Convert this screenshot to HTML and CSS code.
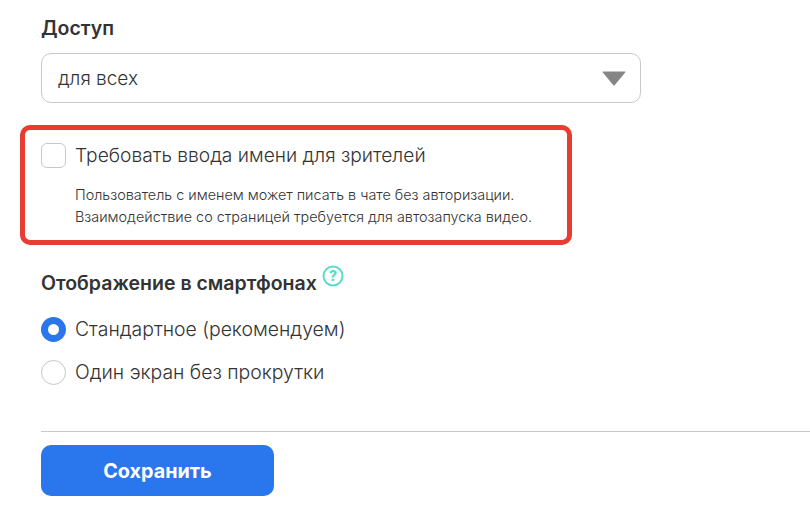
FILE: index.html
```html
<!DOCTYPE html>
<html lang="en">
<head>
    <meta charset="UTF-8">
    <title>Настройки доступа</title>
    <link rel="stylesheet" href="styles.css">
</head>
<body>
    <div class="page">
        <h3 class="title">Доступ</h3>
        <div class="select">
            <span>для всех</span>
            <svg class="select-arrow" width="24" height="15" viewBox="0 0 24 15"><path d="M1 .5h22a.5.5 0 0 1 .4.8L12.6 14.3a.8.8 0 0 1-1.2 0L.6 1.3A.5.5 0 0 1 1 .5z" fill="#858585"/></svg>
        </div>

        <div class="highlight">
            <div class="option option-check">
                <span class="checkbox"></span>
                <span>Требовать ввода имени для зрителей</span>
            </div>
            <p class="hint">Пользователь с именем может писать в чате без авторизации.<br>Взаимодействие со страницей требуется для автозапуска видео.</p>
        </div>

        <div class="title-row">
            <h3 class="title">Отображение в смартфонах</h3>
            <svg class="help" width="22" height="22" viewBox="0 0 22 22">
                <circle cx="11" cy="11" r="9.5" fill="#fff" stroke="#5ddccb" stroke-width="2"/>
                <text x="11" y="16" text-anchor="middle" class="help-mark">?</text>
            </svg>
        </div>

        <div class="option radio-row">
            <span class="radio radio-on"></span>
            <span>Стандартное (рекомендуем)</span>
        </div>
        <div class="option radio-row">
            <span class="radio"></span>
            <span>Один экран без прокрутки</span>
        </div>

        <div class="line"></div>
        <button class="save">Сохранить</button>
    </div>
</body>
</html>
```

FILE: styles.css
```css
body {
    margin: 0;
    background: #fff;
    color: #333;
    font-family: Inter, "Noto Sans", sans-serif;
    overflow: hidden;
}
.page {
    padding: 16px 0 0 41px;
}
.title {
    margin: 0;
    font-size: 19.5px;
    line-height: 24px;
    font-weight: 600;
    color: #333;
}
.select {
    width: 600px;
    height: 50px;
    margin-top: 13px;
    padding: 0 14px 0 16px;
    box-sizing: border-box;
    display: flex;
    align-items: center;
    justify-content: space-between;
    border: 1px solid #c8c8c8;
    border-radius: 10px;
    font-size: 19px;
    font-weight: 300;
}
.highlight {
    width: 552px;
    height: 120px;
    box-sizing: border-box;
    margin: 22px 0 0 -21px;
    padding: 13px 16px;
    border: 5px solid #e63c32;
    border-radius: 10px;
}
.option {
    display: flex;
    align-items: center;
    gap: 9px;
    font-size: 19.4px;
    font-weight: 300;
    line-height: 25px;
}
.option-check {
    font-size: 19.2px;
}
.checkbox {
    width: 25px;
    height: 25px;
    box-sizing: border-box;
    border: 1px solid #c8c8c8;
    border-radius: 6px;
}
.hint {
    margin: 16px 0 0 34px;
    font-size: 14.4px;
    font-weight: 300;
    line-height: 22px;
    white-space: nowrap;
}
.title-row {
    display: flex;
    align-items: flex-start;
    gap: 5px;
    margin-top: 20px;
}
.title-row .title {
    margin-top: 6px;
}
.help-mark {
    font-size: 14px;
    font-weight: 800;
    fill: #5ddccb;
}
.radio-row {
    margin-top: 18px;
}
.title-row + .radio-row {
    margin-top: 22px;
}
.radio {
    width: 25px;
    height: 25px;
    box-sizing: border-box;
    border: 1px solid #c8c8c8;
    border-radius: 50%;
}
.radio-on {
    border: 7.5px solid #2a76ec;
}
.line {
    height: 1px;
    margin-top: 46px;
    background: #c8c8c8;
}
.save {
    display: block;
    width: 233px;
    height: 51px;
    margin-top: 13px;
    border: 0;
    border-radius: 10px;
    background: #2a76ec;
    color: #fff;
    font-family: inherit;
    font-size: 19.8px;
    font-weight: 700;
}
```
